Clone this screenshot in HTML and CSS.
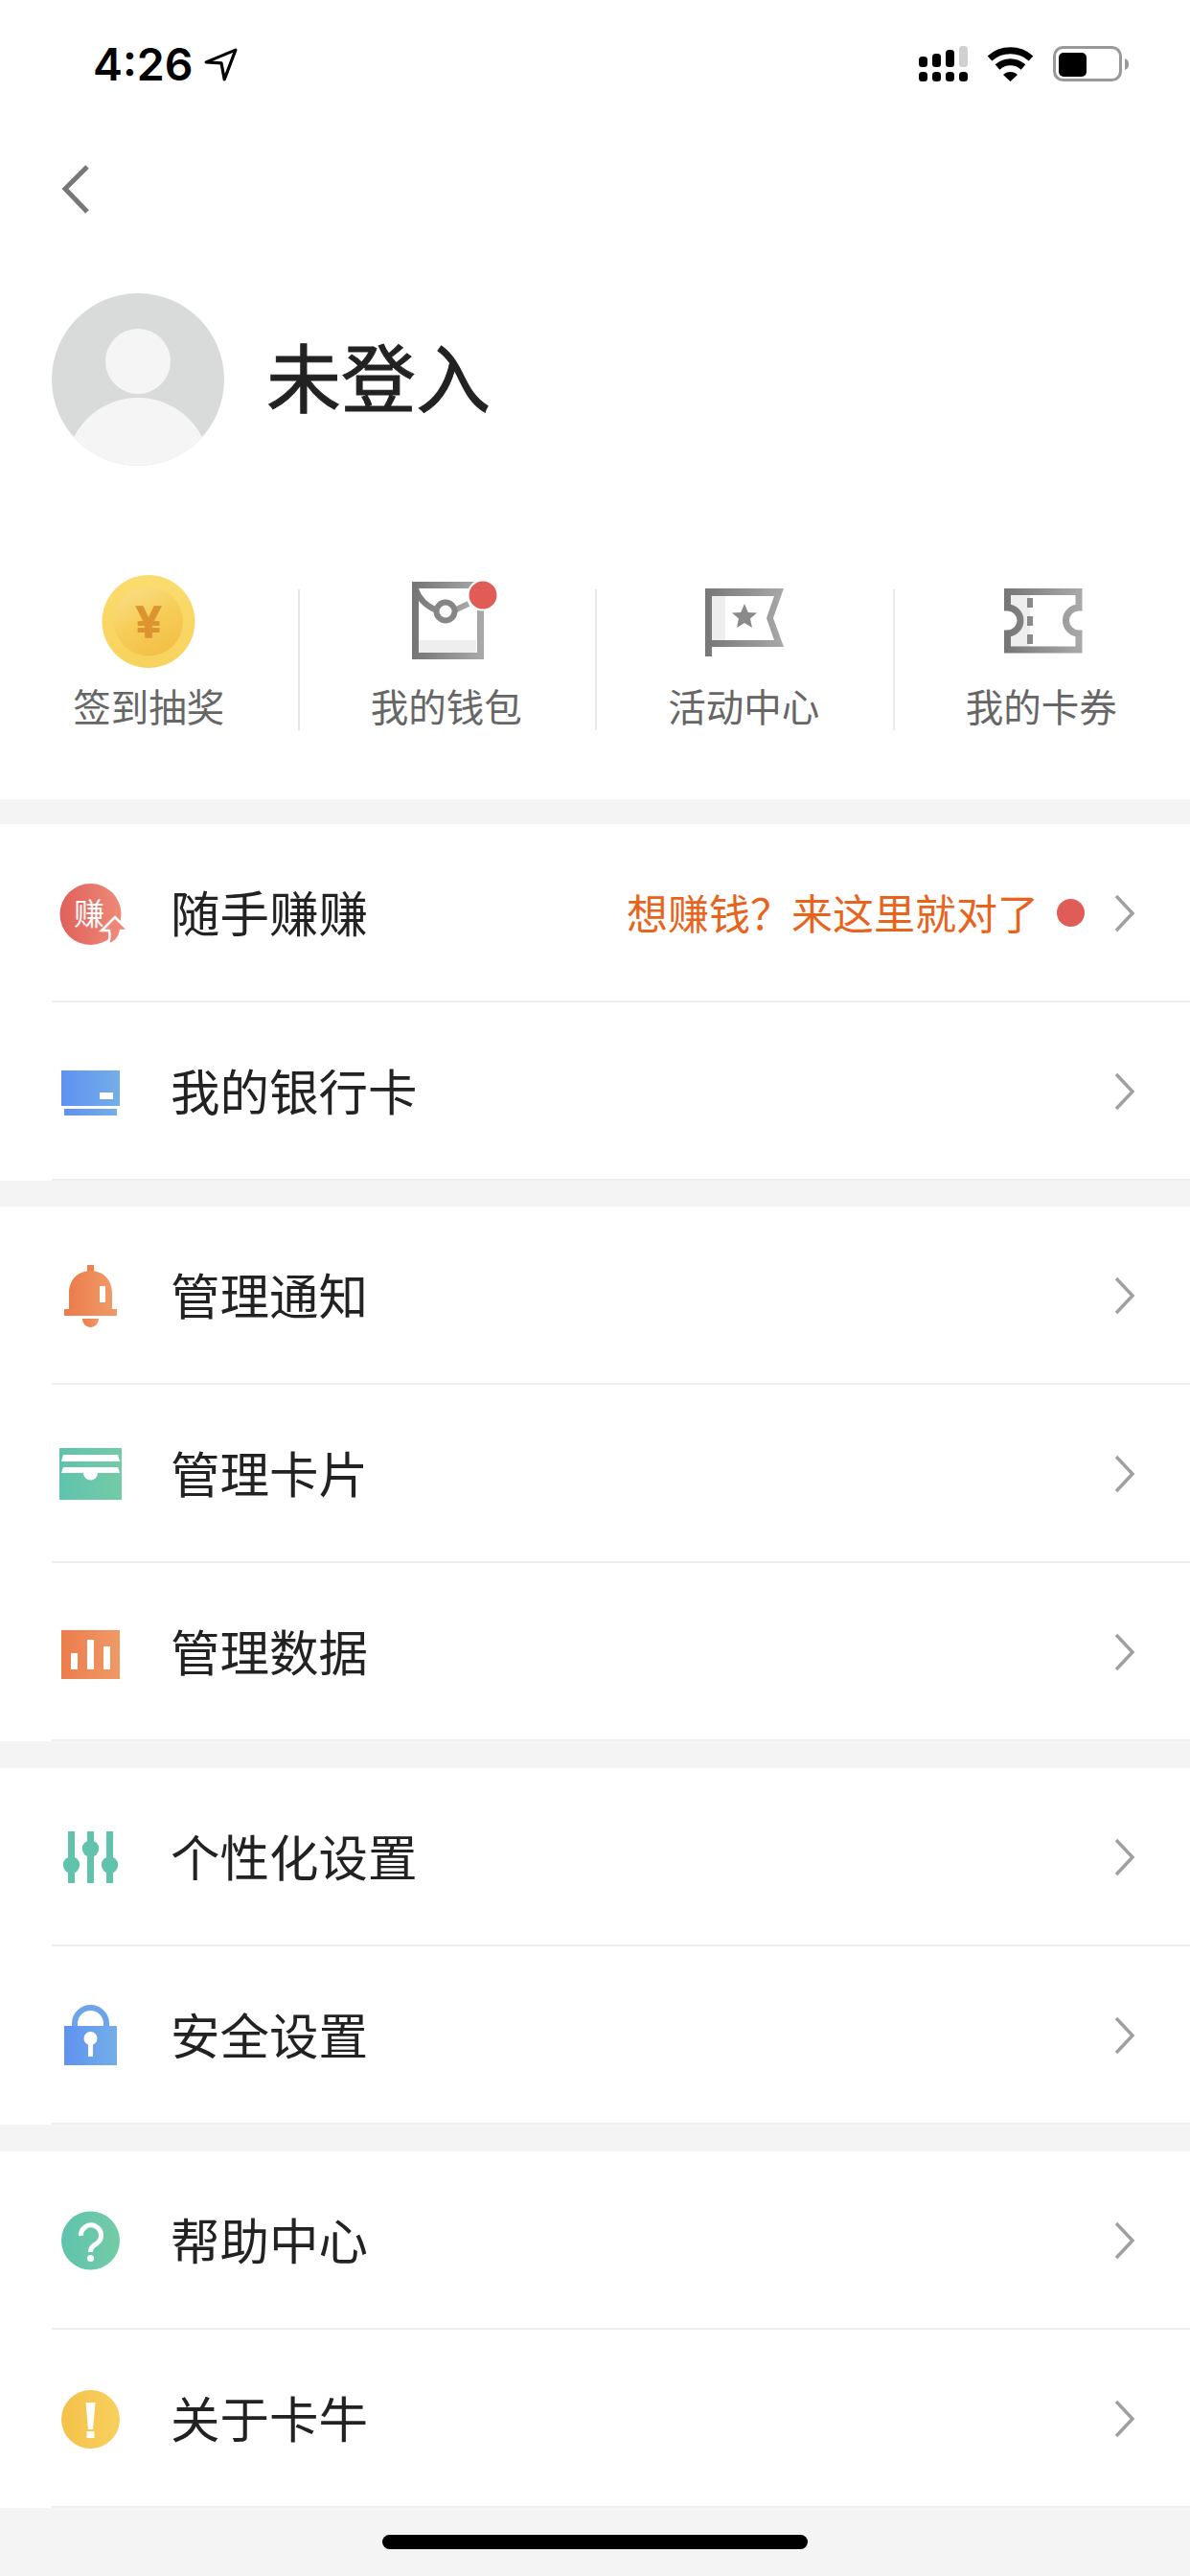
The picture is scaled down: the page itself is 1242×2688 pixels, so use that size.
FILE: index.html
```html
<!DOCTYPE html>
<html lang="zh-CN">
<head>
  <meta charset="UTF-8" />
  <meta name="viewport" content="width=device-width, initial-scale=1" />
  <title>我的</title>
  <link rel="stylesheet" href="styles.css">
</head>
<body>
  <!-- shared gradients for the icons -->
  <svg class="svg-defs" aria-hidden="true">
    <defs>
      <linearGradient id="g-grey"><stop offset="0" stop-color="#777"/><stop offset="1" stop-color="#a8a8a8"/></linearGradient>
      <linearGradient id="g-red"><stop offset="0" stop-color="#e0605a"/><stop offset="1" stop-color="#ee8a78"/></linearGradient>
      <linearGradient id="g-blue"><stop offset="0" stop-color="#5f92f0"/><stop offset="1" stop-color="#74aee8"/></linearGradient>
      <linearGradient id="g-orange"><stop offset="0" stop-color="#ec7c4c"/><stop offset="1" stop-color="#ef9a66"/></linearGradient>
      <linearGradient id="g-green"><stop offset="0" stop-color="#5fc3ad"/><stop offset="1" stop-color="#74cba6"/></linearGradient>
      <linearGradient id="g-yellow"><stop offset="0" stop-color="#f4c14a"/><stop offset="1" stop-color="#f8d05e"/></linearGradient>
      <linearGradient id="g-coin" x1="0" y1="0" x2="0" y2="1"><stop offset="0" stop-color="#fadc6e"/><stop offset="1" stop-color="#f8d25c"/></linearGradient>
      <linearGradient id="g-coin-in" x1="0.2" y1="0" x2="0.7" y2="1"><stop offset="0" stop-color="#f9de85"/><stop offset="0.5" stop-color="#f6cd58"/><stop offset="1" stop-color="#f3bf45"/></linearGradient>
    </defs>
  </svg>

  <div class="status">
    <div class="status-left">
      <span class="status-time">4:26</span>
      <svg class="status-arrow" viewBox="0 0 33 33"><path d="M2 14 L31 2 L20 31 L17 15 Z" fill="none" stroke="#000" stroke-width="3" stroke-linejoin="round"/></svg>
    </div>
    <div class="status-right">
      <svg class="status-signal" viewBox="0 0 51 38">
        <rect x="0" y="11" width="9" height="11" rx="3.5"/><rect x="14" y="8" width="9" height="14" rx="3.5"/><rect x="28" y="4" width="9" height="18" rx="3.5"/><rect x="42" y="0" width="9" height="22" rx="3.5" fill="#d0d0d0"/>
        <rect x="0" y="27" width="9" height="10" rx="3.5"/><rect x="14" y="27" width="9" height="10" rx="3.5"/><rect x="28" y="27" width="9" height="10" rx="3.5"/><rect x="42" y="27" width="9" height="10" rx="3.5"/>
      </svg>
      <svg class="status-wifi" viewBox="0 0 49 38">
        <path d="M3 13 C15 2 34 2 46 13" fill="none" stroke="#000" stroke-width="7"/>
        <path d="M11 22 C19 15 30 15 38 22" fill="none" stroke="#000" stroke-width="7"/>
        <path d="M17 30 C21 26 28 26 32 30 L24.500 37 Z"/>
      </svg>
      <svg class="status-battery" viewBox="0 0 79 38">
        <rect x="1.500" y="1.500" width="69" height="34" rx="9" fill="none" stroke="#999" stroke-width="3"/>
        <rect x="6" y="7" width="29" height="25" rx="5"/>
        <path d="M75 13 C78 14 79 16 79 19 C79 22 78 24 75 25 Z" fill="#999"/>
      </svg>
    </div>
  </div>

  <div class="back">
    <svg class="back-icon" viewBox="0 0 30 52"><path d="M27 2 L4 25 L27 49" fill="none" stroke="#777" stroke-width="5"/></svg>
  </div>

  <div class="profile">
    <svg class="avatar" viewBox="0 0 180 180">
      <defs><clipPath id="avatar-clip"><circle cx="90" cy="90" r="90"/></clipPath></defs>
      <circle cx="90" cy="90" r="90" fill="#d9dbdb"/>
      <circle cx="90" cy="71" r="34" fill="#f5f5f5"/>
      <circle cx="90" cy="184" r="75" fill="#f5f5f5" clip-path="url(#avatar-clip)"/>
    </svg>
    <span class="profile-name">未登入</span>
  </div>

  <div class="shortcuts">
    <div class="shortcut">
      <svg class="shortcut-icon" viewBox="0 0 100 100">
        <circle cx="50" cy="50.500" r="48.500" fill="url(#g-coin)"/>
        <circle cx="50" cy="50.500" r="36" fill="url(#g-coin-in)"/>
        <text class="coin-text" x="50" y="67" text-anchor="middle">¥</text>
      </svg>
      <span class="shortcut-label">签到抽奖</span>
    </div>
    <div class="shortcut">
      <svg class="shortcut-icon" viewBox="1 0 100 100">
        <rect x="20" y="70" width="62" height="17" fill="#eee"/>
        <rect x="18.500" y="12.500" width="68" height="74" fill="none" stroke="url(#g-grey)" stroke-width="7"/>
        <path d="M19 17 Q24 32 41 39 M59 39 L74 32" fill="none" stroke="url(#g-grey)" stroke-width="6"/>
        <circle cx="50" cy="40" r="9.500" fill="#fff" stroke="#868686" stroke-width="6"/>
        <circle cx="89" cy="23" r="15.500" fill="#e05d57" stroke="#fff" stroke-width="2"/>
      </svg>
      <span class="shortcut-label">我的钱包</span>
    </div>
    <div class="shortcut">
      <svg class="shortcut-icon" viewBox="-2 0 100 100">
        <rect x="15" y="24" width="14" height="46" fill="#eee"/>
        <path d="M8 16 H90 L79 47 L90 77 H15 V87 H8 Z M15 24 V70 H80 L72 47 L80 24 Z" fill="url(#g-grey)" fill-rule="evenodd"/>
        <polygon points="49,32 52.800,41 62,41.500 55,47.500 57,57 49,52 41,57 43,47.500 36,41.500 45.200,41" fill="#8a8a8a"/>
      </svg>
      <span class="shortcut-label">活动中心</span>
    </div>
    <div class="shortcut">
      <svg class="shortcut-icon" viewBox="0 0 100 100">
        <rect x="16" y="22" width="22" height="56" fill="#eee"/>
        <circle cx="14.500" cy="49.500" r="13.500" fill="#fff"/>
        <path d="M14.500 19.500 H89 V36 A13.500 13.500 0 0 0 89 63 V80 H14.500 V63 A13.500 13.500 0 0 0 14.500 36 Z" fill="none" stroke="url(#g-grey)" stroke-width="7"/>
        <rect x="35" y="26" width="6" height="10" fill="#8a8a8a"/><rect x="35" y="45" width="6" height="10" fill="#8a8a8a"/><rect x="35" y="64" width="6" height="10" fill="#8a8a8a"/>
      </svg>
      <span class="shortcut-label">我的卡券</span>
    </div>
  </div>

  <div class="group">
    <div class="row">
      <svg class="row-icon" viewBox="0 -1 81 81">
        <circle cx="40.500" cy="41" r="32" fill="url(#g-red)"/>
        <text class="earn-text" x="39" y="52" text-anchor="middle">赚</text>
        <path d="M66 44 L80 58 L72 58 C71 65 66 71 58 73 C61 68 61 63 60 58 L52 58 Z" fill="#ee8778" stroke="#fff" stroke-width="2.500"/>
      </svg>
      <span class="row-title">随手赚赚</span>
      <span class="row-hint">想赚钱？来这里就对了</span>
      <span class="row-dot"></span>
      <svg class="row-arrow" viewBox="0 0 24 40"><path d="M4 2 L21 20 L4 38" fill="none" stroke="#a0a0a0" stroke-width="3.500"/></svg>
    </div>
    <div class="row">
      <svg class="row-icon" viewBox="0 -1 81 81">
        <path d="M10 18 H71 V55 H10 Z M50 41 V48 H64 V41 Z" fill="url(#g-blue)" fill-rule="evenodd"/>
        <rect x="13" y="58" width="55" height="7" fill="url(#g-blue)"/>
      </svg>
      <span class="row-title">我的银行卡</span>
      <svg class="row-arrow" viewBox="0 0 24 40"><path d="M4 2 L21 20 L4 38" fill="none" stroke="#a0a0a0" stroke-width="3.500"/></svg>
    </div>
  </div>

  <div class="group">
    <div class="row">
      <svg class="row-icon" viewBox="0 0 81 81">
        <rect x="37" y="9" width="7" height="10" fill="#ed8351"/>
        <path d="M18 55 V38 C18 24 28 15 40.500 15 C53 15 63 24 63 38 V55 Z M50 31 V48 H56 V31 Z" fill="url(#g-orange)" fill-rule="evenodd"/>
        <rect x="13" y="55" width="55" height="7" fill="url(#g-orange)"/>
        <path d="M32 65 H49 C49 70 45 74 40.500 74 C36 74 32 70 32 65 Z" fill="url(#g-orange)"/>
      </svg>
      <span class="row-title">管理通知</span>
      <svg class="row-arrow" viewBox="0 0 24 40"><path d="M4 2 L21 20 L4 38" fill="none" stroke="#a0a0a0" stroke-width="3.500"/></svg>
    </div>
    <div class="row">
      <svg class="row-icon" viewBox="0 0 81 81">
        <rect x="8" y="14" width="65" height="54" fill="url(#g-green)"/>
        <polygon points="12,21 69,21 71,28 10,28" fill="#fff"/>
        <polygon points="12,34 69,34 71,40 10,40" fill="#fff"/>
        <path d="M33 40 H48 A7.500 7.500 0 0 1 33 40 Z" fill="#fff"/>
      </svg>
      <span class="row-title">管理卡片</span>
      <svg class="row-arrow" viewBox="0 0 24 40"><path d="M4 2 L21 20 L4 38" fill="none" stroke="#a0a0a0" stroke-width="3.500"/></svg>
    </div>
    <div class="row">
      <svg class="row-icon" viewBox="0 0 81 81">
        <rect x="10" y="18" width="61" height="51" fill="url(#g-orange)"/>
        <rect x="20" y="42" width="7" height="17" fill="#fff"/>
        <rect x="37" y="28" width="7" height="31" fill="#fff"/>
        <rect x="54" y="35" width="7" height="24" fill="#fff"/>
      </svg>
      <span class="row-title">管理数据</span>
      <svg class="row-arrow" viewBox="0 0 24 40"><path d="M4 2 L21 20 L4 38" fill="none" stroke="#a0a0a0" stroke-width="3.500"/></svg>
    </div>
  </div>

  <div class="group">
    <div class="row">
      <svg class="row-icon" viewBox="0 1 81 81">
        <rect x="17" y="15" width="7" height="54" fill="#62c3ac"/><rect x="37" y="15" width="7" height="54" fill="#62c3ac"/><rect x="57" y="15" width="7" height="54" fill="#62c3ac"/>
        <circle cx="20.500" cy="50" r="8.700" fill="#62c3ac"/><circle cx="40.500" cy="33" r="8.700" fill="#62c3ac"/><circle cx="60.500" cy="50" r="8.700" fill="#62c3ac"/>
      </svg>
      <span class="row-title">个性化设置</span>
      <svg class="row-arrow" viewBox="0 0 24 40"><path d="M4 2 L21 20 L4 38" fill="none" stroke="#a0a0a0" stroke-width="3.500"/></svg>
    </div>
    <div class="row">
      <svg class="row-icon" viewBox="0 1 81 81">
        <path d="M24 33 V29.500 A16.500 16.500 0 0 1 57 29.500 V33" fill="none" stroke="#6ea5ea" stroke-width="6"/>
        <rect x="13" y="32" width="55" height="41" fill="url(#g-blue)"/>
        <circle cx="40.500" cy="45" r="7" fill="#fff"/>
        <rect x="38" y="46" width="5" height="18" fill="#fff"/>
      </svg>
      <span class="row-title">安全设置</span>
      <svg class="row-arrow" viewBox="0 0 24 40"><path d="M4 2 L21 20 L4 38" fill="none" stroke="#a0a0a0" stroke-width="3.500"/></svg>
    </div>
  </div>

  <div class="group">
    <div class="row">
      <svg class="row-icon" viewBox="0 1 81 81">
        <circle cx="40.500" cy="42" r="30.500" fill="url(#g-green)"/>
        <path d="M30.500 37 A10.500 10.500 0 1 1 47 45 C43 47.500 40.500 49 40.500 54" fill="none" stroke="#fff" stroke-width="5"/>
        <circle cx="40.500" cy="60.500" r="3.500" fill="#fff"/>
      </svg>
      <span class="row-title">帮助中心</span>
      <svg class="row-arrow" viewBox="0 0 24 40"><path d="M4 2 L21 20 L4 38" fill="none" stroke="#a0a0a0" stroke-width="3.500"/></svg>
    </div>
    <div class="row">
      <svg class="row-icon" viewBox="0 1 81 81">
        <circle cx="40.500" cy="42.500" r="30.500" fill="url(#g-yellow)"/>
        <polygon points="35.500,25 45.500,25 43,53 38,53" fill="#fff"/>
        <rect x="36.500" y="55" width="8" height="7" fill="#fff"/>
      </svg>
      <span class="row-title">关于卡牛</span>
      <svg class="row-arrow" viewBox="0 0 24 40"><path d="M4 2 L21 20 L4 38" fill="none" stroke="#a0a0a0" stroke-width="3.500"/></svg>
    </div>
  </div>

  <div class="home">
    <div class="home-bar"></div>
  </div>
</body>
</html>
```

FILE: styles.css
```css
html, body {
  margin: 0;
  padding: 0;
}
body {
  display: flex;
  flex-direction: column;
  height: 100vh;
  overflow: hidden;
  background-color: #fff;
  color: #222;
  font-family: "Noto Sans CJK SC", "Noto Sans", sans-serif;
}
.svg-defs {
  position: absolute;
  width: 0;
  height: 0;
}

/* status bar */
.status {
  display: flex;
  justify-content: space-between;
  align-items: center;
  height: 134px;
  padding: 0 64px 0 97px;
  box-sizing: border-box;
}
.status-left {
  display: flex;
  align-items: center;
  gap: 11px;
}
.status-time {
  font-family: Inter, "Liberation Sans", sans-serif;
  font-size: 46.500px;
  font-weight: 600;
  line-height: 56px;
  color: #000;
}
.status-arrow {
  width: 35px;
  height: 35px;
}
.status-right {
  display: flex;
  align-items: center;
  gap: 20px;
}
.status-signal {
  width: 51px;
  height: 38px;
}
.status-wifi {
  width: 49px;
  height: 38px;
}
.status-battery {
  width: 79px;
  height: 38px;
}

/* back + profile */
.back {
  height: 172px;
  padding: 38px 0 0 64px;
  box-sizing: border-box;
}
.back-icon {
  display: block;
  width: 30px;
  height: 52px;
}
.profile {
  display: flex;
  align-items: center;
  gap: 44px;
  padding-left: 54px;
}
.avatar {
  width: 180px;
  height: 180px;
}
.profile-name {
  padding-bottom: 10px;
  font-size: 78px;
  font-weight: 400;
  line-height: 100px;
  color: #222;
  -webkit-text-stroke: 1px #222;
}

/* four shortcuts */
.shortcuts {
  display: grid;
  flex: none;
  grid-template-columns: repeat(4, 1fr);
  padding: 112px 0 70px;
}
.shortcut {
  position: relative;
  display: flex;
  flex-direction: column;
  align-items: center;
  gap: 10px;
}
.shortcut + .shortcut::before {
  content: "";
  position: absolute;
  left: 0;
  top: 17px;
  bottom: 2px;
  width: 2px;
  background-color: #e8e8e8;
}
.shortcut-icon {
  width: 100px;
  height: 100px;
  overflow: visible;
}
.coin-text {
  font-family: "Liberation Sans", sans-serif;
  font-size: 46px;
  font-weight: 700;
  fill: #dc9330;
  stroke: #dc9330;
  stroke-width: 1.500px;
}
.shortcut-label {
  font-size: 39.500px;
  line-height: 56px;
  color: #666;
}

/* list groups */
.group {
  flex: none;
  background-color: #fff;
  border-top: 28px solid #f4f4f4;
}
.shortcuts + .group {
  border-top-width: 26px;
}
.shortcuts + .group + .group {
  border-top-width: 27px;
}
.row {
  display: flex;
  align-items: center;
  height: 186px;
  margin-left: 54px;
  padding: 1px 57px 0 0;
  box-sizing: border-box;
  border-bottom: 2px solid #eee;
}
.row-icon {
  flex: none;
  width: 81px;
  height: 81px;
  margin-right: 43px;
  overflow: visible;
}
.earn-text {
  font-size: 32px;
  fill: #fff;
}
.row-title {
  flex: 1;
  padding-bottom: 3px;
  font-size: 51.500px;
  line-height: 70px;
  color: #222;
}
.row-hint {
  padding-bottom: 4px;
  font-size: 43px;
  line-height: 60px;
  color: #e8631c;
}
.row-dot {
  width: 29px;
  height: 29px;
  margin: 0 29px 0 19px;
  border-radius: 50%;
  background-color: #e05d57;
}
.row-arrow {
  flex: none;
  width: 24px;
  height: 40px;
}

/* home indicator */
.home {
  flex: 1;
  padding-top: 28px;
  background-color: #f4f4f4;
}
.home-bar {
  width: 444px;
  height: 15px;
  margin: 0 auto;
  border-radius: 8px;
  background-color: #000;
}
```
